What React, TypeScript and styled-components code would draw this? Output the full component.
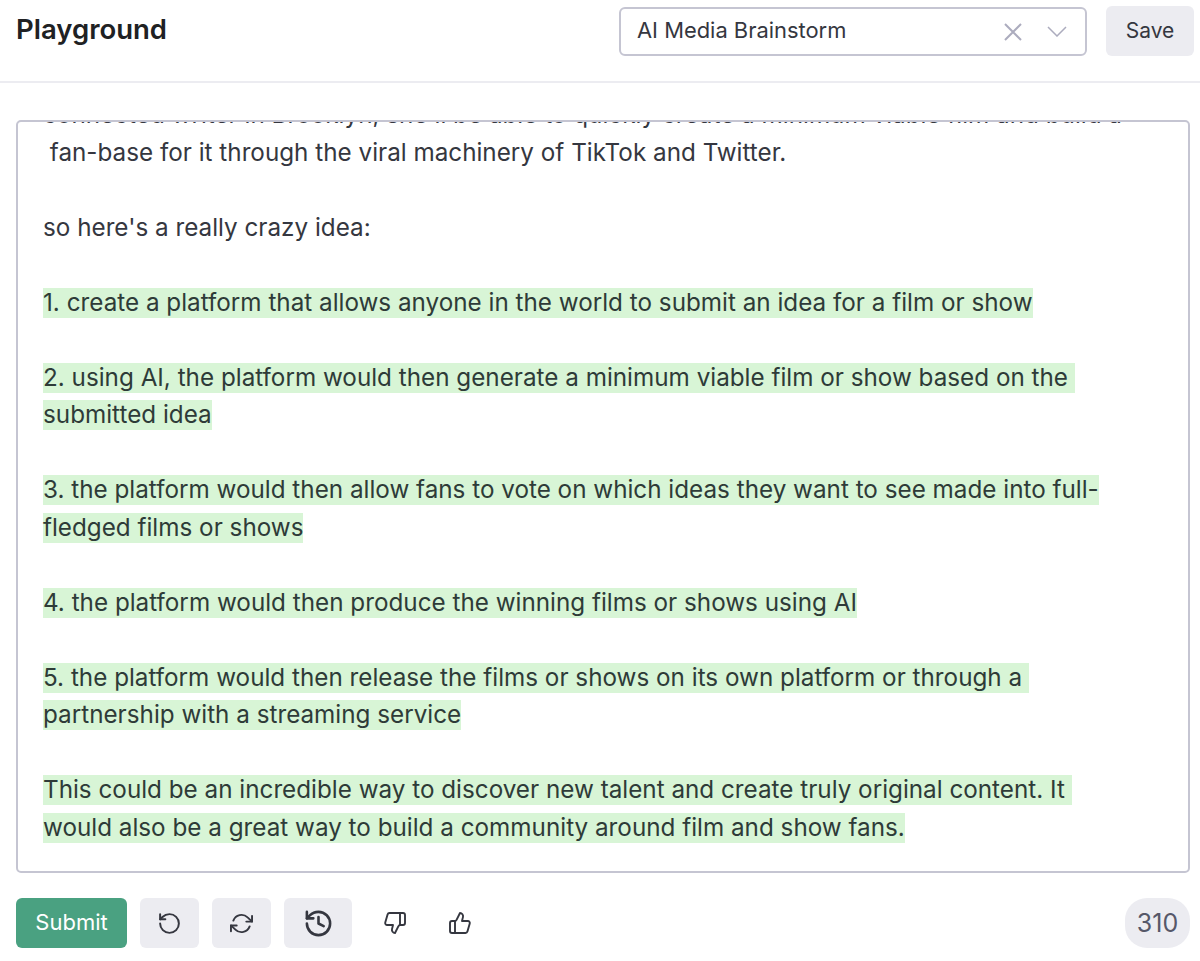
import React from "react";
import styled, { createGlobalStyle } from "styled-components";
import { History, RotateCcw, ThumbsDown, ThumbsUp } from "lucide-react";
import { FiRefreshCw } from "react-icons/fi";

const GlobalStyle = createGlobalStyle`
  html, body {
    margin: 0;
    padding: 0;
    background: #fff;
  }
  body {
    font-family: Inter, "Liberation Sans", sans-serif;
    color: #353740;
  }
`;

const Page = styled.div`
  width: 1200px;
  height: 961px;
  overflow: hidden;
  display: flex;
  flex-direction: column;
`;

const Header = styled.header`
  height: 83px;
  box-sizing: border-box;
  border-bottom: 2px solid #ececf1;
  padding: 6px 6px 0 16px;
  display: flex;
  align-items: flex-start;
  gap: 19px;
`;

const Title = styled.h1`
  flex: 1;
  margin: 0;
  font-size: 27.5px;
  line-height: 46px;
  font-weight: 600;
  color: #202123;
`;

const SelectBox = styled.div`
  width: 468px;
  height: 49px;
  margin-top: 1px;
  box-sizing: border-box;
  border: 2px solid #c5c5d2;
  border-radius: 6px;
  padding: 0 18px 0 16px;
  display: flex;
  align-items: center;
  gap: 25px;
  color: #353740;
`;

const SelectValue = styled.span`
  flex: 1;
  font-size: 21.9px;
  padding-bottom: 3px;
`;

const GrayButton = styled.button<{ $width: number }>`
  width: ${(p) => p.$width}px;
  height: 50px;
  border: 0;
  border-radius: 6px;
  background: #ececf1;
  color: #353740;
  font: inherit;
  font-size: 21px;
  display: flex;
  align-items: center;
  justify-content: center;
  padding: 0;
`;

const SaveButton = styled(GrayButton)`
  padding-bottom: 2px;
`;

const Editor = styled.div`
  margin: 37px 10px 0 16px;
  height: 753px;
  box-sizing: border-box;
  border: 2px solid #c5c5d2;
  border-radius: 5px;
  padding: 0 25px;
  overflow: hidden;
  font-size: 24.25px;
  line-height: 37.5px;
  color: #353740;
`;

const Scrolled = styled.div`
  margin-top: -26px;
  white-space: pre-wrap;
`;

const Line = styled.div`
  min-height: 37.5px;
`;

const Completion = styled.span`
  background: #d8f5d6;
  color: #2e3b38;
  padding-bottom: 1px;
`;

const Footer = styled.footer`
  margin: 25px 10px 0 16px;
  display: flex;
  align-items: center;
  gap: 13px;
`;

const SubmitButton = styled.button`
  width: 111px;
  height: 50px;
  border: 0;
  border-radius: 6px;
  background: #4aa181;
  color: #fff;
  font: inherit;
  font-size: 22px;
  padding: 0 0 2px;
`;

const Ratings = styled.div`
  margin-left: 4px;
  display: flex;
  gap: 13px;
`;

const GhostButton = styled.button`
  width: 52px;
  height: 50px;
  border: 0;
  background: transparent;
  color: #353740;
  display: flex;
  align-items: center;
  justify-content: center;
  padding: 0;
`;

const Counter = styled.div`
  margin-left: auto;
  width: 65px;
  height: 50px;
  border-radius: 22px;
  background: #ececf1;
  color: #565869;
  font-size: 25px;
  display: flex;
  align-items: center;
  justify-content: center;
`;

const ClearIcon = () => (
  <svg width="18" height="18" viewBox="0 0 18 18" fill="none" stroke="#acacbe" strokeWidth="2">
    <path d="M1 1l16 16M17 1L1 17" />
  </svg>
);

const ChevronIcon = () => (
  <svg width="20" height="11" viewBox="0 0 20 11" fill="none" stroke="#acacbe" strokeWidth="1.5">
    <path d="M1 1l9 9 9-9" />
  </svg>
);

const lines: [string, boolean][] = [
  ["connected writer in Brooklyn, she'll be able to quickly create a minimum viable film and build a", false],
  [" fan-base for it through the viral machinery of TikTok and Twitter.", false],
  ["", false],
  ["so here's a really crazy idea:", false],
  ["", false],
  ["1. create a platform that allows anyone in the world to submit an idea for a film or show", true],
  ["", false],
  ["2. using AI, the platform would then generate a minimum viable film or show based on the ", true],
  ["submitted idea", true],
  ["", false],
  ["3. the platform would then allow fans to vote on which ideas they want to see made into full-", true],
  ["fledged films or shows", true],
  ["", false],
  ["4. the platform would then produce the winning films or shows using AI", true],
  ["", false],
  ["5. the platform would then release the films or shows on its own platform or through a ", true],
  ["partnership with a streaming service", true],
  ["", false],
  ["This could be an incredible way to discover new talent and create truly original content. It ", true],
  ["would also be a great way to build a community around film and show fans.", true],
];

export default function App() {
  return (
    <Page>
      <GlobalStyle />
      <Header>
        <Title>Playground</Title>
        <SelectBox>
          <SelectValue>AI Media Brainstorm</SelectValue>
          <ClearIcon />
          <ChevronIcon />
        </SelectBox>
        <SaveButton $width={88}>Save</SaveButton>
      </Header>
      <Editor>
        <Scrolled>
          {lines.map(([text, added], i) => (
            <Line key={i}>{added ? <Completion>{text}</Completion> : text}</Line>
          ))}
        </Scrolled>
      </Editor>
      <Footer>
        <SubmitButton>Submit</SubmitButton>
        <GrayButton $width={59}>
          <RotateCcw size={25} strokeWidth={1.9} />
        </GrayButton>
        <GrayButton $width={59}>
          <FiRefreshCw size={23} strokeWidth={2} />
        </GrayButton>
        <GrayButton $width={68}>
          <History size={31} strokeWidth={2} />
        </GrayButton>
        <Ratings>
          <GhostButton>
            <ThumbsDown size={24} strokeWidth={1.9} />
          </GhostButton>
          <GhostButton>
            <ThumbsUp size={24} strokeWidth={1.9} />
          </GhostButton>
        </Ratings>
        <Counter>310</Counter>
      </Footer>
    </Page>
  );
}
